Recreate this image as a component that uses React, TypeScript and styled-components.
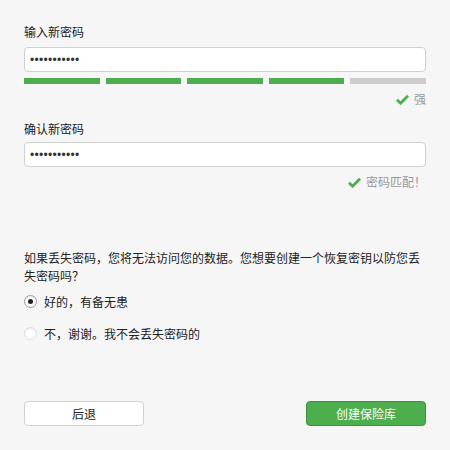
import React, { useState } from 'react'
import styled, { createGlobalStyle } from 'styled-components'

const GlobalStyle = createGlobalStyle`
    html, body {
        margin: 0;
        padding: 0;
        background: #f6f6f6;
    }
    * {
        box-sizing: border-box;
    }
`

const CheckIcon: React.FC = () => (
    <svg width="13" height="11" viewBox="0 0 13 11">
        <path d="M1 5.8 L4.6 9.2 L12 1.8" fill="none" stroke="#4cae4c" strokeWidth="2.8" strokeLinejoin="miter" />
    </svg>
)

const strength = [true, true, true, true, false]

const App: React.FC = () => {
    const [keepKey, setKeepKey] = useState(true)

    return (
        <StyledPage>
            <GlobalStyle />
            <StyledLabel>输入新密码</StyledLabel>
            <StyledInput type={'password'} defaultValue={'abcdefghijk'} readOnly marginTop={7} />
            <StyledStrengthBar>
                {strength.map((on, i) => (
                    <StyledSegment key={i} active={on} />
                ))}
            </StyledStrengthBar>
            <StyledHint marginTop={7}>
                <CheckIcon />
                <span>强</span>
            </StyledHint>

            <StyledLabel marginTop={14}>确认新密码</StyledLabel>
            <StyledInput type={'password'} defaultValue={'abcdefghijk'} readOnly marginTop={5} />
            <StyledHint marginTop={7}>
                <CheckIcon />
                <span>密码匹配！</span>
            </StyledHint>

            <StyledQuestion>
                如果丢失密码，您将无法访问您的数据。您想要创建一个恢复密钥以防您丢失密码吗？
            </StyledQuestion>
            <StyledRadioRow onClick={() => setKeepKey(true)} marginTop={6}>
                <StyledRadio checked={keepKey} />
                <span>好的，有备无患</span>
            </StyledRadioRow>
            <StyledRadioRow onClick={() => setKeepKey(false)} marginTop={12}>
                <StyledRadio checked={!keepKey} />
                <span>不，谢谢。我不会丢失密码的</span>
            </StyledRadioRow>

            <StyledButtonRow>
                <StyledButton>后退</StyledButton>
                <StyledButton primary>创建保险库</StyledButton>
            </StyledButtonRow>
        </StyledPage>
    )
}

const StyledPage = styled.div`
    display: flex;
    flex-direction: column;
    width: 450px;
    height: 450px;
    padding: 24px 24px 24px 24px;
    background: #f6f6f6;
    font-family: "Noto Sans CJK SC", "Liberation Sans", sans-serif;
    font-size: 12px;
    color: #222;
`

interface MarginProps {
    marginTop?: number
}

const StyledLabel = styled.div<MarginProps>`
    line-height: 16px;
    margin-top: ${(props) => props.marginTop ? props.marginTop : 0}px;
    color: #222;
`

const StyledInput = styled.input<MarginProps>`
    width: 100%;
    height: 25px;
    margin: ${(props) => props.marginTop ? props.marginTop : 0}px 0 0 0;
    padding: 0 5px;
    background: #fff;
    border: 1px solid #cfcfcf;
    border-radius: 4px;
    font-family: "Liberation Sans", sans-serif;
    font-size: 12px;
    letter-spacing: 0.3px;
    color: #333;
    outline: none;
`

const StyledStrengthBar = styled.div`
    display: flex;
    gap: 6px;
    margin-top: 6px;
`

const StyledSegment = styled.div<{ active: boolean }>`
    flex: 1;
    height: 6px;
    background: ${(props) => props.active ? '#4cae4c' : '#cccccc'};
`

const StyledHint = styled.div<MarginProps>`
    display: flex;
    justify-content: flex-end;
    align-items: center;
    gap: 5px;
    line-height: 16px;
    margin-top: ${(props) => props.marginTop ? props.marginTop : 0}px;
    color: #999;
`

const StyledQuestion = styled.p`
    margin: 59px 0 0 0;
    line-height: 18px;
    color: #222;
`

const StyledRadioRow = styled.div<MarginProps>`
    display: flex;
    align-items: center;
    gap: 7px;
    height: 20px;
    margin-top: ${(props) => props.marginTop ? props.marginTop : 0}px;
    cursor: pointer;
`

const StyledRadio = styled.span<{ checked: boolean }>`
    position: relative;
    width: 13px;
    height: 13px;
    border-radius: 50%;
    background: #fff;
    border: 1px solid ${(props) => props.checked ? '#9a9a9a' : '#dcdcdc'};
    box-shadow: inset 0 1px 1px rgba(0, 0, 0, 0.08);

    &::after {
        content: '';
        display: ${(props) => props.checked ? 'block' : 'none'};
        position: absolute;
        left: 3px;
        top: 3px;
        width: 5px;
        height: 5px;
        border-radius: 50%;
        background: #222;
    }
`

const StyledButtonRow = styled.div`
    display: flex;
    justify-content: space-between;
    margin-top: auto;
`

const StyledButton = styled.button<{ primary?: boolean }>`
    width: 120px;
    height: 25px;
    padding: 0;
    border-radius: 4px;
    font-family: "Noto Sans CJK SC", "Liberation Sans", sans-serif;
    font-size: 12px;
    cursor: pointer;
    background: ${(props) => props.primary ? '#4cae4c' : '#fff'};
    border: 1px solid ${(props) => props.primary ? '#3f8f40' : '#cfcfcf'};
    color: ${(props) => props.primary ? '#fff' : '#222'};
`

export default App
